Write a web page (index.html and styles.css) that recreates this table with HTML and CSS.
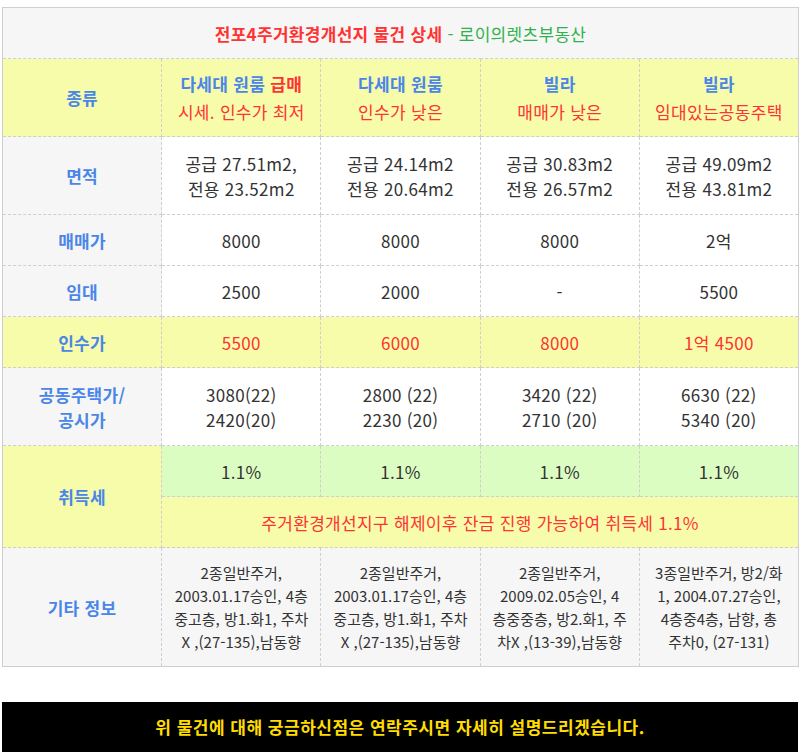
FILE: index.html
```html
<!DOCTYPE html>
<html lang="ko">
<head>
<meta charset="utf-8">
<title>전포4주거환경개선지 물건 상세</title>
<link rel="stylesheet" href="styles.css">
</head>
<body>
<div class="page">
  <table class="detail">
    <colgroup><col><col><col><col><col></colgroup>
    <tr class="h51">
      <td colspan="5" class="title"><strong class="red">전포4주거환경개선지 물건 상세</strong><span class="green"> - 로이의렛츠부동산</span></td>
    </tr>
    <tr class="h78 yellow head">
      <th>종류</th>
      <td><b class="blue">다세대 원룸</b> <b class="red">급매</b><br><span class="red">시세. 인수가 최저</span></td>
      <td><b class="blue">다세대 원룸</b><br><span class="red">인수가 낮은</span></td>
      <td><b class="blue">빌라</b><br><span class="red">매매가 낮은</span></td>
      <td><b class="blue">빌라</b><br><span class="red">임대있는공동주택</span></td>
    </tr>
    <tr class="h78">
      <th>면적</th>
      <td>공급 27.51m2,<br>전용 23.52m2</td>
      <td>공급 24.14m2<br>전용 20.64m2</td>
      <td>공급 30.83m2<br>전용 26.57m2</td>
      <td>공급 49.09m2<br>전용 43.81m2</td>
    </tr>
    <tr class="h51">
      <th>매매가</th>
      <td>8000</td><td>8000</td><td>8000</td><td>2억</td>
    </tr>
    <tr class="h51">
      <th>임대</th>
      <td>2500</td><td>2000</td><td>-</td><td>5500</td>
    </tr>
    <tr class="h51 yellow price">
      <th>인수가</th>
      <td>5500</td><td>6000</td><td>8000</td><td>1억 4500</td>
    </tr>
    <tr class="h78">
      <th>공동주택가/<br>공시가</th>
      <td>3080(22)<br>2420(20)</td>
      <td>2800 (22)<br>2230 (20)</td>
      <td>3420 (22)<br>2710 (20)</td>
      <td>6630 (22)<br>5340 (20)</td>
    </tr>
    <tr class="h51">
      <th rowspan="2" class="yellow">취득세</th>
      <td class="mint">1.1%</td><td class="mint">1.1%</td><td class="mint">1.1%</td><td class="mint">1.1%</td>
    </tr>
    <tr class="h51">
      <td colspan="4" class="yellow red">주거환경개선지구 해제이후 잔금 진행 가능하여 취득세 1.1%</td>
    </tr>
    <tr class="h119 etc">
      <th>기타 정보</th>
      <td>2종일반주거,<br>2003.01.17승인, 4층<br>중고층, 방1.화1, 주차<br>X ,(27-135),남동향</td>
      <td>2종일반주거,<br>2003.01.17승인, 4층<br>중고층, 방1.화1, 주차<br>X ,(27-135),남동향</td>
      <td>2종일반주거,<br>2009.02.05승인, 4<br>층중중층, 방2.화1, 주<br>차X ,(13-39),남동향</td>
      <td>3종일반주거, 방2/화<br>1, 2004.07.27승인,<br>4층중4층, 남향, 총<br>주차0, (27-131)</td>
    </tr>
  </table>
  <div class="notice">위 물건에 대해 궁금하신점은 연락주시면 자세히 설명드리겠습니다.</div>
</div>
</body>
</html>
```

FILE: styles.css
```css
html, body {
  margin: 0;
  padding: 0;
  background: #fff;
}
body {
  font-family: "Noto Sans CJK KR", "Noto Sans", sans-serif;
  font-size: 17px;
  letter-spacing: 0.3px;
  color: #333;
}
.page {
  padding: 7px 0 0 2px;
}
.detail {
  width: 797px;
  border-collapse: collapse;
  table-layout: fixed;
  border: 1px solid #cfcfcf;
}
.detail th,
.detail td {
  border: 1px dashed #cfcfcf;
  padding: 0;
  text-align: center;
  vertical-align: middle;
  line-height: 25px;
  background: #fff;
  font-weight: normal;
}
.detail th {
  background: #f6f6f6;
  color: #4a86e8;
  font-weight: bold;
}
.detail .title {
  background: #f6f6f6;
}
.h51 { height: 51px; }
.h78 { height: 78px; }
.h119 { height: 119px; }

.red { color: #ff3333; }
.green { color: #2fb24c; }
.blue { color: #4a86e8; }

.detail .yellow,
.detail tr.yellow th,
.detail tr.yellow td {
  background: #f7fcab;
}
.detail .mint {
  background: #dcfdc1;
}
.head td {
  line-height: 28px;
}
.head b {
  font-weight: bold;
}
.price td {
  color: #ff3333;
}
.etc td {
  background: #f6f6f6;
  font-size: 15px;
  letter-spacing: 0;
  line-height: 23px;
}
.notice {
  width: 796px;
  height: 50px;
  margin-top: 35px;
  background: #000;
  color: #ffdd00;
  font-weight: bold;
  font-size: 17px;
  letter-spacing: 0.5px;
  line-height: 50px;
  text-align: center;
}
```
